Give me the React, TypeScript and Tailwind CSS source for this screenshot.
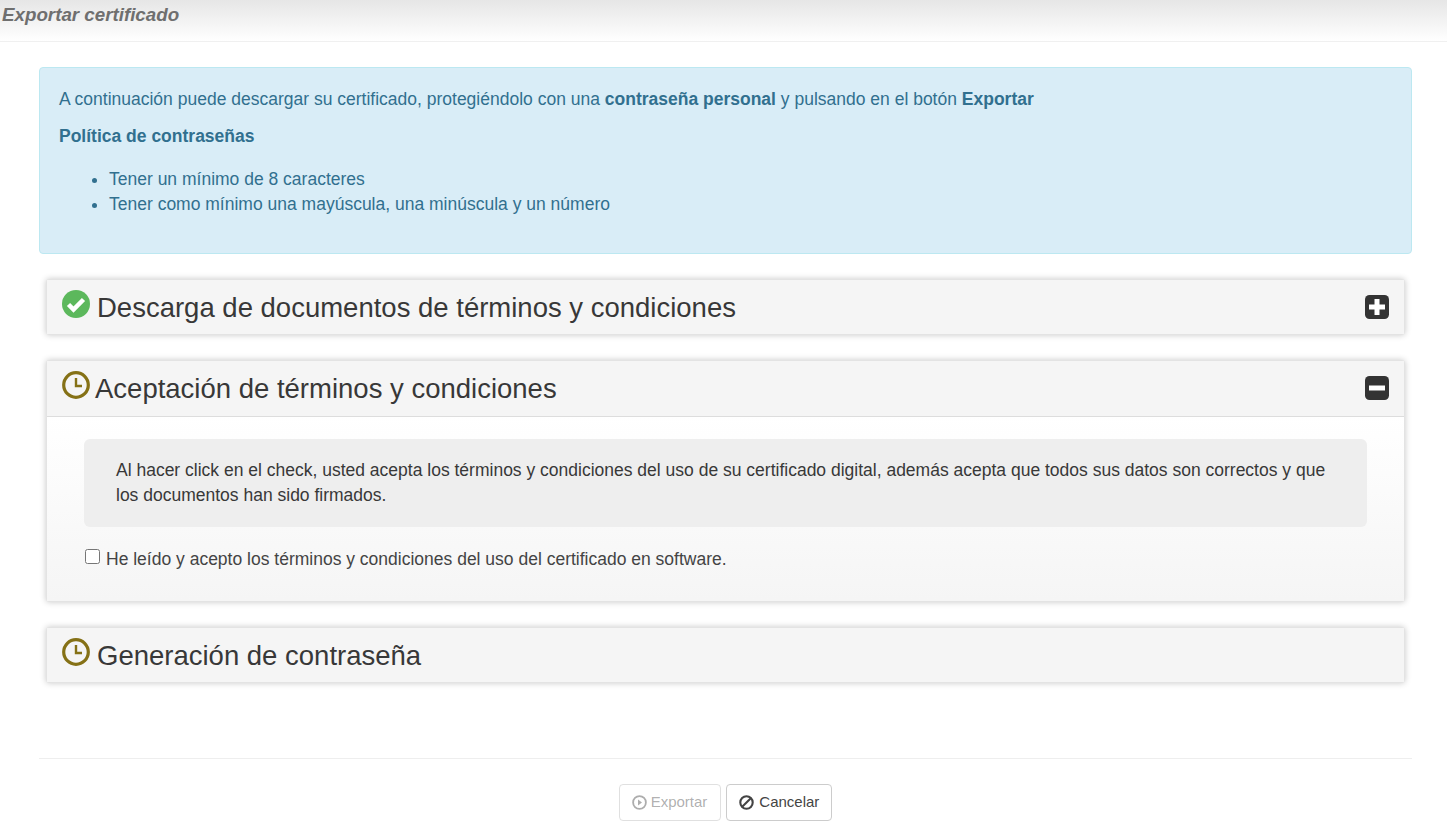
import type { ReactNode } from "react";

type PanelProps = {
  icon: ReactNode;
  title: string;
  toggle?: ReactNode;
  titleClass?: string;
  children?: ReactNode;
};

function CheckIcon() {
  return (
    <svg width="28" height="28" viewBox="0 0 28 28">
      <circle cx="14" cy="14" r="14" fill="#5cb85c" />
      <path d="M6.5 14.5l5 5 10-10" fill="none" stroke="#fff" strokeWidth="4.5" />
    </svg>
  );
}

function ClockIcon() {
  return (
    <svg width="28" height="28" viewBox="0 0 28 28">
      <circle cx="14" cy="14" r="12.3" fill="none" stroke="#857116" strokeWidth="3.2" />
      <path d="M14 7v8h6" fill="none" stroke="#857116" strokeWidth="2.4" />
    </svg>
  );
}

function ToggleIcon({ open }: { open?: boolean }) {
  return (
    <svg width="24" height="24" viewBox="0 0 24 24" className={`block ${open ? "-mt-[2px]" : ""}`}>
      <rect width="24" height="24" rx="4.5" fill="#333" />
      <path d={open ? "M4 12h16" : "M4 12h16M12 4v16"} stroke="#fff" strokeWidth="5" />
    </svg>
  );
}

function PlayCircleIcon() {
  return (
    <svg width="15" height="15" viewBox="0 0 15 15">
      <circle cx="7.5" cy="7.5" r="6.4" fill="none" stroke="currentColor" strokeWidth="1.8" />
      <path d="M6 4.6l4 2.9-4 2.9z" fill="currentColor" />
    </svg>
  );
}

function BanIcon() {
  return (
    <svg width="15" height="15" viewBox="0 0 15 15">
      <circle cx="7.5" cy="7.5" r="6.2" fill="none" stroke="currentColor" strokeWidth="2.1" />
      <path d="M3.2 11.8l8.6-8.6" stroke="currentColor" strokeWidth="2.1" />
    </svg>
  );
}

function Panel({ icon, title, toggle, titleClass = "ml-[7px]", children }: PanelProps) {
  return (
    <section className="mx-[7px] rounded-[3px] border border-[#e3e3e3] bg-white shadow-[0_0_6px_rgba(0,0,0,0.22)]">
      <header className={`flex items-center bg-[#f5f5f5] pl-[15px] pr-[15px] ${children ? "h-[56px] border-b border-[#ddd]" : "h-[54px]"}`}>
        <span className="-mt-[7px] shrink-0">{icon}</span>
        <h2 className={`text-[27.5px] leading-[28px] text-[#383838] ${children ? "" : "mt-[2px]"} ${titleClass}`}>{title}</h2>
        {toggle && <span className="ml-auto">{toggle}</span>}
      </header>
      {children}
    </section>
  );
}

export default function App() {
  return (
    <div className="min-h-[834px] bg-white font-['Liberation_Sans',Arial,sans-serif] text-[17.5px] text-[#383838]">
      <div className="h-[42px] border-b border-[#f0f0f0] bg-gradient-to-b from-[#e6e6e6] to-white pl-[2px] pt-[4px]">
        <h1 className="text-[18.75px] leading-[22px] font-bold italic text-[#6f6f6f]">Exportar certificado</h1>
      </div>

      <main className="pl-[39px] pr-[35px] pt-[25px]">
        <div className="h-[187px] rounded-[4px] border border-[#bce8f1] bg-[#d9edf7] px-[19px] pt-[20px] text-[#31708f]">
          <p className="leading-[22px]">
            A continuación puede descargar su certificado, protegiéndolo con una <b>contraseña personal</b> y pulsando en el botón <b>Exportar</b>
          </p>
          <p className="mt-[15px] leading-[22px] font-bold">Política de contraseñas</p>
          <ul className="mt-[20px] list-disc pl-[50px] leading-[25px]">
            <li>Tener un mínimo de 8 caracteres</li>
            <li>Tener como mínimo una mayúscula, una minúscula y un número</li>
          </ul>
        </div>

        <div className="mt-[25px] flex flex-col gap-[25px]">
          <Panel icon={<CheckIcon />} title="Descarga de documentos de términos y condiciones" toggle={<ToggleIcon />} />
          <Panel icon={<ClockIcon />} title="Aceptación de términos y condiciones" titleClass="ml-[5px]" toggle={<ToggleIcon open />}>
            <div className="h-[184px] bg-gradient-to-b from-white to-[#f5f5f5] px-[37px] pt-[22px]">
              <div className="h-[88px] rounded-[6px] bg-[#eee] px-[32px] pt-[19px] leading-[25px]">
                Al hacer click en el check, usted acepta los términos y condiciones del uso de su certificado digital, además acepta que todos sus datos son correctos y que los documentos han sido firmados.
              </div>
              <label className="mt-[20px] flex items-center leading-[25px] text-[#444]">
                <input type="checkbox" className="ml-[1px] -mt-[7px] h-[15px] w-[15px]" />
                <span className="ml-[6px]">He leído y acepto los términos y condiciones del uso del certificado en software.</span>
              </label>
            </div>
          </Panel>
          <Panel icon={<ClockIcon />} title="Generación de contraseña" />
        </div>

        <div className="mt-[75px] border-t border-[#eee] pt-[25px]">
          <div className="flex justify-center gap-[5px] text-[15px]">
            <button disabled className="flex h-[37px] items-center gap-[4px] rounded-[4px] border border-[#ccc]/60 pl-[12px] pr-[13px] text-[#333]/40">
              <PlayCircleIcon />
              Exportar
            </button>
            <button className="flex h-[37px] items-center gap-[5px] rounded-[4px] border border-[#ccc] px-[12px] text-[#444]">
              <BanIcon />
              Cancelar
            </button>
          </div>
        </div>
      </main>
    </div>
  );
}
